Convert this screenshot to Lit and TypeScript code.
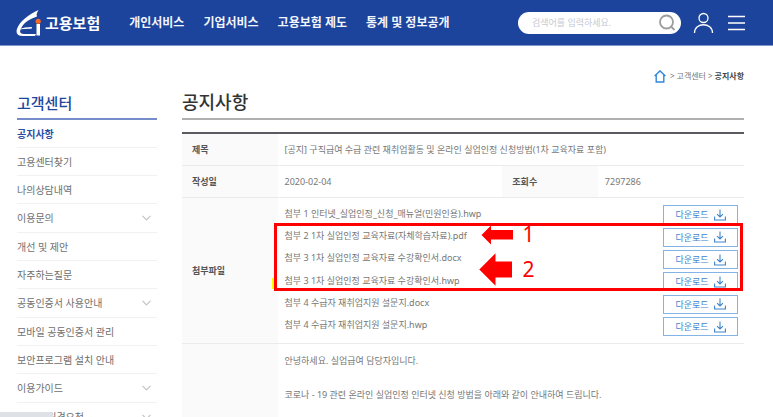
import { LitElement, html, css, nothing } from "lit";
import { customElement } from "lit/decorators.js";

const MENU = [
  { label: "공지사항", active: true },
  { label: "고용센터찾기" },
  { label: "나의상담내역" },
  { label: "이용문의", sub: true },
  { label: "개선 및 제안" },
  { label: "자주하는질문" },
  { label: "공동인증서 사용안내", sub: true },
  { label: "모바일 공동인증서 관리" },
  { label: "보안프로그램 설치 안내" },
  { label: "이용가이드", sub: true },
  { label: "실시간 원격요청", sub: true },
];

const FILES = [
  "첨부 1 인터넷_실업인정_신청_매뉴얼(민원인용).hwp",
  "첨부 2 1차 실업인정 교육자료(자체학습자료).pdf",
  "첨부 3 1차 실업인정 교육자료 수강확인서.docx",
  "첨부 3 1차 실업인정 교육자료 수강확인서.hwp",
  "첨부 4 수급자 재취업지원 설문지.docx",
  "첨부 4 수급자 재취업지원 설문지.hwp",
];

const base = css`
  * { box-sizing: border-box; }
  a { color: inherit; text-decoration: none; }
  ul { list-style: none; margin: 0; padding: 0; }
  h1, h2, p { margin: 0; }
  svg { display: block; flex: none; }
  button { font: inherit; color: inherit; background: none; border: 0; padding: 0; }
`;

@customElement("site-header")
export class SiteHeader extends LitElement {
  static styles = [base, css`
    :host { display: block; }
    .bar { display: flex; align-items: center; height: 46px; padding: 0 28px 0 16px; background: #1c449c; border-bottom: 1px solid #7d95cb; color: #fff; }
    .logo { display: flex; align-items: center; gap: 4px; font-size: 15px; font-weight: 700; line-height: 20px; }
    .nav { display: flex; gap: 19px; margin-left: 29px; font-size: 12px; font-weight: 700; line-height: 20px; white-space: nowrap; color: #f1f5fc; }
    .search { display: flex; align-items: center; width: 163px; height: 22px; margin-left: auto; padding: 0 5px 0 14px; background: #fff; border-radius: 11px; }
    .search input { flex: 1; min-width: 0; border: 0; outline: 0; padding: 0; background: none; font: inherit; font-size: 9px; }
    .search input::placeholder { color: #c6cad2; opacity: 1; }
    .user { margin-left: 12px; }
    .menu { margin-left: 14px; }
  `];
  render() {
    return html`<header class="bar">
      <a class="logo" href="#">
        <svg width="25" height="28" viewBox="0 0 25 28">
          <path d="M22.500 1C13 5 3 13 .8 20.500C-.2 25 2 27 8 27H19L20 25H8C4 25 3.300 23 5 19.500C8 13 14 10 21 7.500C20 5 21.500 3 22.500 1Z" fill="#fff"/>
          <path d="M3 20.500C7 18.700 11 18 16 18L15.500 19.800C11 19.600 7 20 3 20.500Z" fill="#fff"/>
          <path d="M20.500 15H24V26.500H20.500Z" fill="#fff"/>
          <circle cx="22.200" cy="12.300" r="2.600" fill="#f06a25"/>
        </svg>
        <span>고용보험</span>
      </a>
      <nav class="nav">
        <a href="#">개인서비스</a><a href="#">기업서비스</a><a href="#">고용보험 제도</a><a href="#">통계 및 정보공개</a>
      </nav>
      <form class="search">
        <input type="text" aria-label="검색어" placeholder="검색어를 입력하세요." />
        <button type="button" aria-label="검색">
          <svg width="18" height="18" viewBox="0 0 18 18" fill="none" stroke="#9c9c9c" stroke-width="1.800">
            <circle cx="8.500" cy="8" r="6.500"/><path d="M13 12.500L16.500 16"/>
          </svg>
        </button>
      </form>
      <button class="user" type="button" aria-label="로그인">
        <svg width="21" height="22" viewBox="0 0 21 22" fill="none" stroke="#fff" stroke-width="1.300">
          <circle cx="10.500" cy="6" r="4.500"/><path d="M1.500 21C1.500 10 19.500 10 19.500 21"/>
        </svg>
      </button>
      <button class="menu" type="button" aria-label="전체메뉴">
        <svg width="17" height="16" viewBox="0 0 17 16" stroke="#fff" stroke-width="1.300">
          <path d="M0 1.500H17M0 8H17M0 14.500H17"/>
        </svg>
      </button>
    </header>`;
  }
}

@customElement("side-menu")
export class SideMenu extends LitElement {
  static styles = [base, css`
    :host { display: block; }
    .title { padding-bottom: 3px; border-bottom: 2px solid #758dca; font-size: 15px; font-weight: 500; line-height: 24px; color: #1e469d; }
    .item { display: flex; align-items: center; justify-content: space-between; height: 28px; padding-right: 6px; border-bottom: 1px solid #f1f1f1; font-size: 10px; line-height: 16px; color: #6e6e6e; white-space: nowrap; }
    .sub { height: 29px; }
    .active { font-weight: 700; color: #2a4ea3; }
  `];
  render() {
    return html`<h2 class="title">고객센터</h2>
      <ul>${MENU.map((m) => html`<li>
        <a href="#" class="item ${m.sub ? "sub" : ""} ${m.active ? "active" : ""}">${m.label}
          ${m.sub ? html`<svg width="9" height="6" viewBox="0 0 9 6" fill="none" stroke="#c4c4c4" stroke-width="1.200"><path d="M.5 .8L4.500 5L8.500 .8"/></svg>` : nothing}
        </a></li>`)}</ul>`;
  }
}

@customElement("notice-view")
export class NoticeView extends LitElement {
  static styles = [base, css`
    :host { display: block; }
    .title { padding-bottom: 2px; border-bottom: 2px solid #b0b0b0; font-size: 18px; font-weight: 500; line-height: 28px; color: #333; }
    .table { width: 100%; margin-top: 12px; border-collapse: separate; border-spacing: 0; table-layout: fixed; border-top: 2px solid #5c5a60; font-size: 9px; line-height: 17px; color: #777; }
    .label { width: 17%; }
    .wide { width: 40%; }
    th, td { height: 32px; padding: 0 7px; border-bottom: 1px solid #ebebeb; text-align: left; }
    th { padding: 0 10px; background: #fafafa; font-weight: 700; color: #555; }
    .files { position: relative; padding: 4px 6px 7px 7px; }
    .list { display: grid; grid-auto-rows: 1fr; min-height: 134px; }
    .file { display: flex; align-items: center; justify-content: space-between; }
    .down { display: flex; align-items: center; justify-content: center; gap: 5px; align-self: flex-end; width: 75px; height: 19px; border: 1px solid #84b3e6; color: #3f83cd; }
    .body { padding: 8px 7px; vertical-align: top; }
    .para { margin-bottom: 17px; }
    .frame { position: absolute; top: 25px; left: -4px; right: 1px; height: 68px; border: 3px solid #f00; pointer-events: none; }
    .mark { position: absolute; top: 80px; left: -6px; width: 2px; height: 11px; background: #ff0; }
    .note { position: absolute; left: 201px; display: flex; align-items: center; font-size: 21px; line-height: 24px; color: #f00; }
    .note svg { width: 34px; }
    .note span { margin-left: 10px; padding-bottom: 2px; }
    .first { top: 24px; }
    .second { top: 55px; }
  `];
  render() {
    return html`<h1 class="title">공지사항</h1>
      <table class="table">
        <colgroup><col class="label" /><col class="wide" /><col class="label" /><col /></colgroup>
        <tbody>
          <tr><th scope="row">제목</th><td colspan="3">[공지] 구직급여 수급 관련 재취업활동 및 온라인 실업인정 신청방법(1차 교육자료 포함)</td></tr>
          <tr><th scope="row">작성일</th><td>2020-02-04</td><th scope="row">조회수</th><td>7297286</td></tr>
          <tr><th scope="row">첨부파일</th><td colspan="3" class="files">
            <ul class="list">${FILES.map((f) => html`<li class="file"><a href="#">${f}</a>
              <button class="down" type="button">다운로드
                <svg width="12" height="12" viewBox="0 0 12 12" fill="none" stroke="#3f83cd" stroke-width="1.100"><path d="M6 .5V8M3 5.200L6 8L9 5.200M.6 7.500V11H11.400V7.500"/></svg>
              </button></li>`)}</ul>
            <div class="mark"></div>
            <div class="frame"></div>
            <div class="note first">
              <svg height="20" viewBox="0 0 34 20"><path d="M2.500 10L12 .5V5H34.500V14.500H12V19.500Z" fill="#f00"/></svg><span>1</span>
            </div>
            <div class="note second">
              <svg height="33" viewBox="0 0 34 33"><path d="M.3 16.500L16.500 .3V8.500H33V24.500H16.500V32.700Z" fill="#f00"/></svg><span>2</span>
            </div>
          </td></tr>
          <tr><th></th><td colspan="3" class="body">
            <p class="para">안녕하세요. 실업급여 담당자입니다.</p>
            <p class="para">코로나 - 19 관련 온라인 실업인정 인터넷 신청 방법을 아래와 같이 안내하여 드립니다.</p>
          </td></tr>
        </tbody>
      </table>`;
  }
}

@customElement("app-root")
export class AppRoot extends LitElement {
  static styles = [base, css`
    :host { display: block; height: 100vh; overflow: hidden; background: #fff; font-family: "Noto Sans", "Noto Sans CJK KR", sans-serif; }
    .page { padding: 20px 29px 0 17px; }
    .crumbs { display: flex; align-items: center; justify-content: flex-end; gap: 2px; height: 20px; font-size: 8px; line-height: 12px; color: #777; }
    .home { margin-right: 2px; }
    .here { font-weight: 700; color: #444; }
    .columns { display: grid; grid-template-columns: 140px 1fr; column-gap: 25px; align-items: start; padding-top: 2px; }
    .side { padding-top: 3px; }
    .status { position: fixed; left: 0; bottom: 0; width: 53px; height: 5px; background: #dee1e6; border-top-right-radius: 3px; }
  `];
  render() {
    return html`<site-header></site-header>
      <div class="page">
        <nav class="crumbs" aria-label="현재 위치">
          <a class="home" href="#" aria-label="홈">
            <svg width="12" height="13" viewBox="0 0 12 13" fill="none" stroke="#3187d8" stroke-width="1.400"><path d="M.6 6L6 .9L11.400 6M2.200 5V12H9.800V5"/></svg>
          </a>
          <span>&gt;</span><a href="#">고객센터</a><span>&gt;</span><span class="here">공지사항</span>
        </nav>
        <div class="columns">
          <side-menu class="side"></side-menu>
          <notice-view></notice-view>
        </div>
      </div>
      <div class="status"></div>`;
  }
}
